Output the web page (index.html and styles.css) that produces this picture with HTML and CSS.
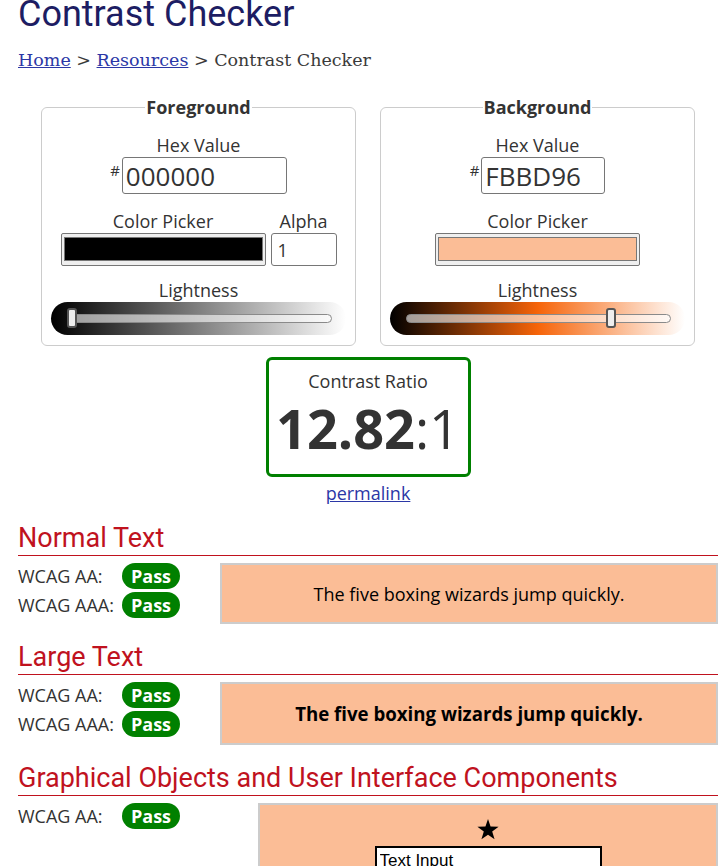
FILE: index.html
```html
<!DOCTYPE html>
<html lang="en">
<head>
<meta charset="utf-8">
<title>Contrast Checker</title>
<link rel="stylesheet" href="styles.css">
</head>
<body>
<div class="page">
  <h1 class="title">Contrast Checker</h1>
  <nav class="crumbs"><a href="#">Home</a> &gt; <a href="#">Resources</a> &gt; Contrast Checker</nav>

  <div class="pickers">
    <fieldset class="picker">
      <legend>Foreground</legend>
      <div class="label">Hex Value</div>
      <div class="hexrow"><span class="hash">#</span><input class="hex hex-fg" value="000000"></div>
      <div class="cprow">
        <div class="col">
          <div class="label">Color Picker</div>
          <div class="swatch-btn"><div class="swatch swatch-fg"></div></div>
        </div>
        <div class="col">
          <div class="label">Alpha</div>
          <input class="alpha" value="1">
        </div>
      </div>
      <div class="label light-label">Lightness</div>
      <div class="slider slider-fg"><div class="track"><div class="thumb" style="--pos:0"></div></div></div>
    </fieldset>

    <fieldset class="picker">
      <legend>Background</legend>
      <div class="label">Hex Value</div>
      <div class="hexrow"><span class="hash">#</span><input class="hex hex-bg" value="FBBD96"></div>
      <div class="cprow">
        <div class="col">
          <div class="label">Color Picker</div>
          <div class="swatch-btn"><div class="swatch swatch-bg"></div></div>
        </div>
      </div>
      <div class="label light-label">Lightness</div>
      <div class="slider slider-bg"><div class="track"><div class="thumb" style="--pos:0.786"></div></div></div>
    </fieldset>
  </div>

  <div class="ratio">
    <div class="ratio-label">Contrast Ratio</div>
    <div class="ratio-value"><b>12.82</b>:1</div>
  </div>
  <div class="permalink"><a href="#">permalink</a></div>

  <section class="block">
    <h2>Normal Text</h2>
    <div class="result">
      <div class="checks">
        <div class="check"><span class="check-label">WCAG AA:</span><span class="badge">Pass</span></div>
        <div class="check"><span class="check-label">WCAG AAA:</span><span class="badge">Pass</span></div>
      </div>
      <div class="sample sample-normal">The five boxing wizards jump quickly.</div>
    </div>
  </section>

  <section class="block">
    <h2>Large Text</h2>
    <div class="result">
      <div class="checks">
        <div class="check"><span class="check-label">WCAG AA:</span><span class="badge">Pass</span></div>
        <div class="check"><span class="check-label">WCAG AAA:</span><span class="badge">Pass</span></div>
      </div>
      <div class="sample sample-large">The five boxing wizards jump quickly.</div>
    </div>
  </section>

  <section class="block">
    <h2>Graphical Objects and User Interface Components</h2>
    <div class="result result-ui">
      <div class="checks">
        <div class="check"><span class="check-label">WCAG AA:</span><span class="badge">Pass</span></div>
      </div>
      <div class="sample-ui">
        <svg class="star" width="22" height="21" viewBox="0 0 24 23" aria-hidden="true"><polygon points="12,0 14.8,8.3 23.6,8.5 16.6,13.8 19.2,22.3 12,17.2 4.8,22.3 7.4,13.8 0.4,8.5 9.2,8.3" fill="#000"/></svg>
        <input class="demo-input" value="Text Input">
      </div>
    </div>
  </section>
</div>
</body>
</html>
```

FILE: styles.css
```css
html { overflow: hidden; }
body {
  margin: 0;
  font-family: "Open Sans", sans-serif;
  color: #333;
  background: #fff;
}
.page {
  width: 700px;
  margin-left: 18px;
}
.title {
  font: 400 36px/43px Roboto, sans-serif;
  color: #1d1d63;
  margin: -7px 0 0;
}
.crumbs {
  font: 17.5px/24px "DejaVu Serif", serif;
  color: #3a3a3a;
  margin-top: 12px;
}
.crumbs a { color: #2b37a6; }

.pickers {
  display: flex;
  justify-content: center;
  gap: 24px;
  margin-top: 23px;
}
.picker {
  width: 315px;
  box-sizing: border-box;
  margin: 0;
  min-width: 0;
  border: 1px solid #ccc;
  border-radius: 6px;
  padding: 14px 9px 10px;
  text-align: center;
}
.picker legend {
  margin: 0 auto;
  padding: 0 1px;
  font-weight: 700;
  font-size: 18px;
  line-height: 24px;
}
.label {
  font-size: 18px;
  line-height: 24px;
}
.hexrow {
  display: flex;
  justify-content: center;
  align-items: flex-start;
  gap: 2px;
}
.hash {
  font-size: 15px;
  line-height: 20px;
  margin-top: 3px;
}
.hex {
  font: 26px "Open Sans", sans-serif;
  color: #333;
  height: 37px;
  box-sizing: border-box;
  border: 1px solid #767676;
  border-radius: 3px;
  padding: 0 3px;
  margin: 0;
}
.hex-fg { width: 165px; }
.hex-bg { width: 124px; }

.cprow {
  display: flex;
  justify-content: center;
  gap: 5px;
  margin-top: 15px;
}
.col {
  display: flex;
  flex-direction: column;
  align-items: center;
}
.swatch-btn {
  width: 205px;
  height: 33px;
  box-sizing: border-box;
  border: 1px solid #767676;
  border-radius: 2px;
  background: #efefef;
  padding: 3px 2px 4px;
}
.swatch {
  height: 100%;
  box-sizing: border-box;
  border: 1px solid #777;
}
.swatch-fg { background: #000; }
.swatch-bg { background: #fbbd96; }
.alpha {
  width: 66px;
  height: 33px;
  box-sizing: border-box;
  border: 1px solid #767676;
  border-radius: 3px;
  padding: 0 6px;
  margin: 0;
  font: 18px "Open Sans", sans-serif;
  color: #333;
}
.light-label { margin-top: 12px; }
.slider {
  height: 33px;
  box-sizing: border-box;
  border-radius: 17px;
  padding: 12px 14px 12px 16px;
}
.slider-fg { background: linear-gradient(to right, #000, #fff); }
.slider-bg { background: linear-gradient(to right, hsl(23, 93%, 0%), hsl(23, 93%, 50%), hsl(23, 93%, 100%)); }
.track {
  position: relative;
  height: 9px;
  box-sizing: border-box;
  border: 1px solid #8a8a8a;
  border-radius: 5px;
  background: rgba(255, 255, 255, 0.6);
}
.thumb {
  position: absolute;
  top: -7px;
  left: calc(var(--pos) * (100% - 8px) - 1px);
  width: 10px;
  height: 20px;
  box-sizing: border-box;
  border: 2px solid #555;
  border-radius: 3px;
  background: #eee;
}

.ratio {
  width: 205px;
  height: 120px;
  box-sizing: border-box;
  margin: 11px auto 0;
  border: 3px solid #008000;
  border-radius: 6px;
  padding-top: 9px;
  text-align: center;
}
.ratio-label {
  font-size: 18px;
  line-height: 24px;
}
.ratio-value {
  font-size: 54px;
  line-height: 64px;
  margin-top: 3px;
  color: #333;
}
.ratio-value b { font-weight: 700; }
.permalink {
  text-align: center;
  margin-top: 4px;
  font-size: 18px;
  line-height: 24px;
}
.permalink a { color: #2b37a6; }

.block h2 {
  font: 400 27px/32px Roboto, sans-serif;
  color: #c0121e;
  margin: 17px 0 0;
  padding-bottom: 1px;
  border-bottom: 1px solid #c0121e;
}
.result {
  display: grid;
  grid-template-columns: 202px 1fr;
  margin-top: 7px;
}
.result-ui { grid-template-columns: 240px 1fr; }
.checks {
  display: flex;
  flex-direction: column;
  gap: 3px;
}
.check {
  display: flex;
  align-items: center;
  height: 26px;
}
.check-label {
  width: 104px;
  font-size: 18px;
  line-height: 24px;
}
.badge {
  display: inline-flex;
  align-items: center;
  justify-content: center;
  width: 58px;
  height: 26px;
  border-radius: 13px;
  background: #008000;
  color: #fff;
  font-weight: 700;
  font-size: 18px;
}
.sample {
  display: flex;
  align-items: center;
  justify-content: center;
  box-sizing: border-box;
  background: #fbbd96;
  border: 2px solid #ccc;
  color: #000;
}
.sample-normal {
  height: 61px;
  font-size: 18px;
}
.sample-large {
  height: 63px;
  font-size: 18.66px;
  font-weight: 700;
}
.sample-ui {
  height: 100px;
  box-sizing: border-box;
  background: #fbbd96;
  border: 2px solid #ccc;
  display: flex;
  flex-direction: column;
  align-items: center;
  padding-top: 14px;
}
.star { display: block; }
.demo-input {
  margin-top: 6px;
  width: 227px;
  height: 30px;
  box-sizing: border-box;
  border: 2px solid #000;
  padding: 0 3px;
  font: 17px "Liberation Sans", Arial, sans-serif;
  color: #000;
  background: #fff;
}
```
